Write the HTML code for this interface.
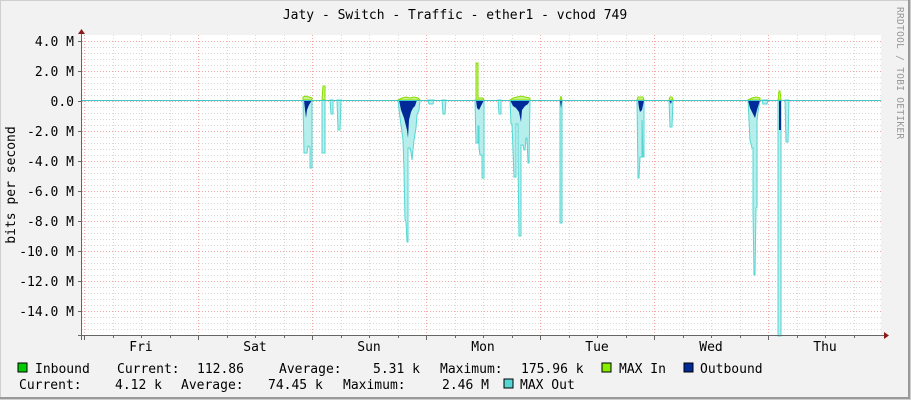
<!DOCTYPE html>
<html><head><meta charset="utf-8"><style>
html,body{margin:0;padding:0;background:#f2f2f2;}
svg{display:block;}
text{font-family:"DejaVu Sans Mono","Liberation Mono",monospace;}
</style></head><body>
<svg width="911" height="400" xmlns="http://www.w3.org/2000/svg">
<rect x="0" y="0" width="911" height="400" fill="#f2f2f2"/>
<path d="M0 0H911V400H0Z" fill="none" stroke="#cfcfcf" stroke-width="2"/>
<path d="M909 0V398H0" fill="none" stroke="#9a9a9a" stroke-width="2"/>
<rect x="82" y="35" width="799" height="301" fill="#ffffff"/>
<g id="grid" stroke-width="1" fill="none"></g>
<text x="455" y="19" font-size="13" text-anchor="middle" fill="#000">Jaty - Switch - Traffic - ether1 - vchod 749</text>
<text transform="translate(897,7) rotate(90)" font-size="9.5" fill="#999" letter-spacing="0.3">RRDTOOL / TOBI OETIKER</text>
<text transform="translate(15,185) rotate(-90)" font-size="13" text-anchor="middle" fill="#000">bits per second</text>
<g font-size="13" text-anchor="end" fill="#000">
<text x="74" y="46">4.0 M</text><text x="74" y="76">2.0 M</text><text x="74" y="106">0.0</text>
<text x="74" y="136">-2.0 M</text><text x="74" y="166">-4.0 M</text><text x="74" y="196">-6.0 M</text>
<text x="74" y="226">-8.0 M</text><text x="74" y="256">-10.0 M</text><text x="74" y="286">-12.0 M</text>
<text x="74" y="316">-14.0 M</text></g>
<g font-size="13" text-anchor="middle" fill="#000">
<text x="141" y="351">Fri</text><text x="255" y="351">Sat</text><text x="369" y="351">Sun</text>
<text x="483" y="351">Mon</text><text x="597" y="351">Tue</text><text x="711" y="351">Wed</text><text x="825" y="351">Thu</text></g>
<g id="data"></g>
<!-- legend -->
<g font-size="13" fill="#000">
<rect x="18" y="363" width="9" height="9" fill="#00cc00" stroke="#000" stroke-width="1"/>
<text x="35" y="373">Inbound</text><text x="117" y="373">Current:</text><text x="197" y="373">112.86</text>
<text x="279" y="373">Average:</text><text x="373" y="373">5.31 k</text><text x="440" y="373">Maximum:</text>
<text x="521" y="373">175.96 k</text>
<rect x="602" y="363" width="9" height="9" fill="#88ee00" stroke="#000" stroke-width="1"/>
<text x="619" y="373">MAX In</text>
<rect x="684" y="363" width="9" height="9" fill="#002a97" stroke="#000" stroke-width="1"/>
<text x="700" y="373">Outbound</text>
<text x="19" y="389">Current:</text><text x="115" y="389">4.12 k</text><text x="181" y="389">Average:</text>
<text x="268" y="389">74.45 k</text><text x="343" y="389">Maximum:</text><text x="442" y="389">2.46 M</text>
<rect x="504" y="379" width="9" height="9" fill="#55d6d3" stroke="#000" stroke-width="1"/>
<text x="520" y="389">MAX Out</text>
</g>
</svg>
<script>
var g=document.getElementById('grid'),s='';
for(var y=41;y<=335;y+=6){var maj=((y-41)%30==0);s+='<line x1="82" x2="881" y1="'+(y+.5)+'" y2="'+(y+.5)+'" stroke="'+(maj?'#f3a6a6':'#d8d8d8')+'" stroke-dasharray="1,2"/>';}
for(var i=0;i<=28;i++){var x=84+i*28.5;if(x>881)break;var maj=(i%4==0);s+='<line y1="35" y2="336" x1="'+(Math.round(x)+.5)+'" x2="'+(Math.round(x)+.5)+'" stroke="'+(maj?'#f3a6a6':'#d8d8d8')+'" stroke-dasharray="1,2"/>';}
g.innerHTML=s;
var cy=[
"303,100 304,153 307,153 308,146 310,147 310,168 312,168 312,100",
"322,100 322,153 325,153 325,100",
"330,100 331,114 333,114 333,100","337,100 338,130 340,130 341,100",
"398,100 399,110 401,125 403,140 404,170 405,220 406,222 407,242 408,242 408,148 410,148 411,152 412,160 413,150 414,140 416,128 417,115 419,110 420,100",
"428,100 429,104 433,104 434,100","442,100 443,114 445,114 446,100",
"475,100 476,143 478,143 478,126 479,126 479,148 480,155 482,155 482,178 484,178 484,100",
"498,100 499,114 501,114 501,100",
"510,100 511,124 512,124 513,150 514,177 516,177 516,124 518,124 518,160 519,236 521,236 521,145 523,145 524,150 525,150 526,138 527,138 528,163 529,163 530,100",
"560,100 560,223 562,223 562,100",
"637,100 638,178 639,178 640,157 642,157 642,120 643,157 644,157 644,100",
"669,100 670,127 672,127 673,100",
"748,100 749,120 750,140 751,144 752,148 753,148 753,212 754,275 755,275 756,208 757,207 757,120 758,112 760,100",
"762,100 763,104 767,104 768,100",
"778,100 778,336 781,336 781,100","785,100 786,142 788,142 789,100"];
var bl=["304,100 305,110 306,118 307,110 309,105 312,100","399,100 401,110 404,118 407,130 408,138 409,120 411,112 413,108 415,106 417,100",
"476,100 477,108 479,110 481,106 484,100","510,100 513,106 516,108 519,112 521,122 522,110 525,106 528,104 530,100",
"560,100 561,108 562,100","638,100 639,108 640,112 642,110 644,100","669,100 671,104 672,100",
"748,100 750,108 752,112 755,118 757,110 760,100","779,100 779,130 781,130 781,100"];
var gr=["303,100 303,97 306,96 309,97 312,98 312,100","322,100 323,86 325,86 325,100","398,100 402,98 406,97 410,98 414,97 418,98 420,100",
"476,100 476,63 478,63 478,98 483,98 484,100","510,100 513,98 517,97 521,96 525,97 530,98 530,100","560,100 561,96 562,100",
"637,100 638,97 643,97 644,100","669,100 670,97 672,97 673,100","748,100 752,98 756,97 760,98 760,100","778,100 779,91 780,91 781,100"];
var d='';
cy.forEach(function(p){d+='<polygon points="'+p+'" fill="#b6eeec" stroke="#55d6d3" stroke-width="1"/>';});
gr.forEach(function(p){d+='<polygon points="'+p+'" fill="#c8f38a" stroke="#88dd00" stroke-width="1"/>';});
bl.forEach(function(p){d+='<polygon points="'+p+'" fill="#002a97"/>';});
d+='<line x1="82" x2="881" y1="100.5" y2="100.5" stroke="#3cc8c4" stroke-width="1"/>';
d+='<line x1="78" x2="884" y1="335.5" y2="335.5" stroke="#666"/>';
d+='<polygon points="884,332 889,335.5 884,339" fill="#8b1a1a"/>';
d+='<line x1="81.5" x2="81.5" y1="340" y2="34" stroke="#666"/>';
d+='<polygon points="78,34 81.5,29 85,34" fill="#8b1a1a"/>';
for(var y=41;y<=311;y+=30)d+='<line x1="78" x2="82" y1="'+(y+.5)+'" y2="'+(y+.5)+'" stroke="#666"/>';
for(var i=0;i<=28;i++){var x=Math.round(84+i*28.5)+.5;if(x>881)break;d+='<line y1="336" y2="'+(i%4==0?340:338)+'" x1="'+x+'" x2="'+x+'" stroke="#666"/>';}
document.getElementById('data').innerHTML=d;
</script>
</body></html>
